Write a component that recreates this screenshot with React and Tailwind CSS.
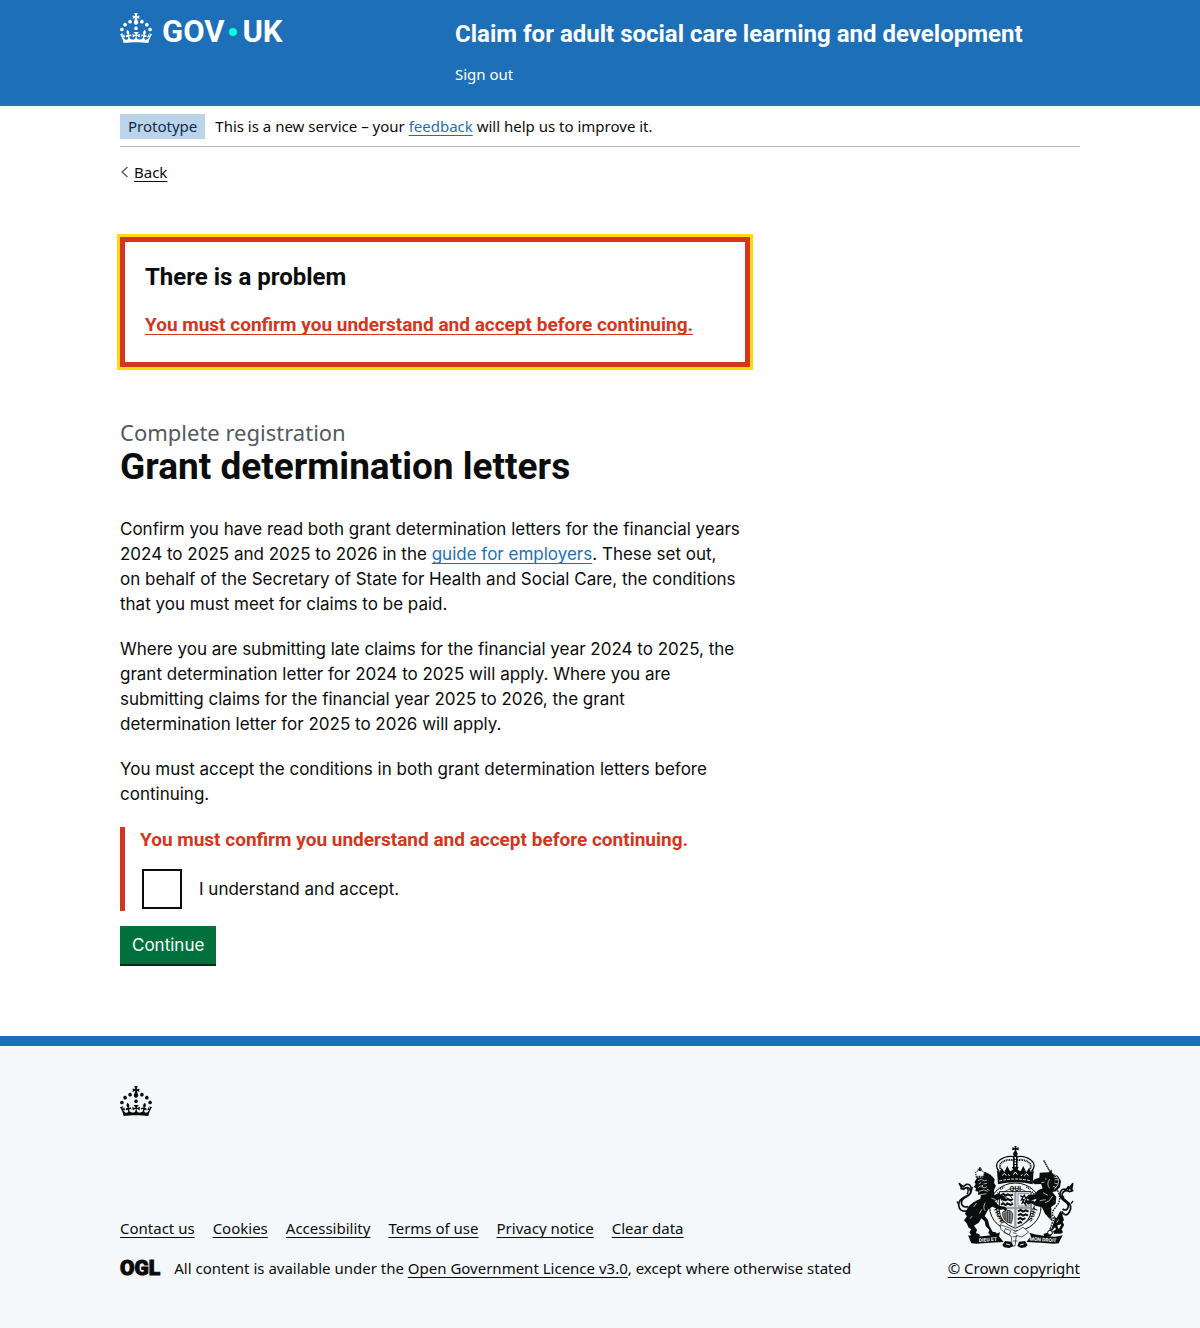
import React from "react";

const CROWN =
  "M22.6 10.4c-1 .4-2-.1-2.4-1-.4-.9.1-2 1-2.4.9-.4 2 .1 2.4 1s-.1 2-1 2.4m-5.9 6.7c-.9.4-2-.1-2.4-1-.4-.9.1-2 1-2.4.9-.4 2 .1 2.4 1s-.1 2-1 2.4m10.8-3.7c-1 .4-2-.1-2.4-1-.4-.9.1-2 1-2.4.9-.4 2 .1 2.4 1s0 2-1 2.4m3.3 4.8c-1 .4-2-.1-2.4-1-.4-.9.1-2 1-2.4.9-.4 2 .1 2.4 1s-.1 2-1 2.4M17 4.7l2.3 1.2V2.5l-2.3.7-.2-.2.9-3h-3.4l.9 3-.2.2c-.1.1-2.3-.7-2.3-.7v3.4L15 4.7c.1.1.1.2.2.2l-1.3 4c-.1.2-.1.4-.1.6 0 1.1.8 2 1.9 2.2h.7c1-.2 1.9-1.1 1.9-2.1 0-.2 0-.4-.1-.6l-1.3-4c-.1-.2 0-.2.1-.3m-7.6 5.7c.9.4 2-.1 2.4-1 .4-.9-.1-2-1-2.4-.9-.4-2 .1-2.4 1s0 2 1 2.4m-5 3c.9.4 2-.1 2.4-1 .4-.9-.1-2-1-2.4-.9-.4-2 .1-2.4 1s.1 2 1 2.4m-3.2 4.8c.9.4 2-.1 2.4-1 .4-.9-.1-2-1-2.4-.9-.4-2 .1-2.4 1s0 2 1 2.4m14.8 11c4.4 0 8.6.3 12.3.8 1.1-4.5 2.4-7 3.7-8.8l-2.5-.9c.2 1.3.3 1.9 0 2.7-.4-.4-.8-1.1-1.1-2.3l-1.2 4c.7-.5 1.3-.8 2-.9-1.1 2.5-2.6 3.1-3.5 3-1.1-.2-1.7-1.2-1.5-2.1.3-1.2 1.5-1.5 2.1-.1 1.1-2.3-.8-3-2-2.3 1.9-1.9 2.1-3.5.6-5.6-2.1 1.6-2.1 3.2-1.2 5.5-1.2-1.4-3.2-.6-2.5 1.6.9-1.4 2.1-.5 1.9.8-.2 1.1-1.7 2.1-3.5 1.9-2.7-.2-2.9-2.1-2.9-3.6.7-.1 1.9.5 2.9 1.9l.4-4.3c-1.1 1.1-2.1 1.4-3.2 1.4.4-1.2 2.1-3 2.1-3h-5.4s1.7 1.9 2.1 3c-1.1 0-2.1-.2-3.2-1.4l.4 4.3c1-1.4 2.2-2 2.9-1.9-.1 1.5-.2 3.4-2.9 3.6-1.9.2-3.4-.8-3.5-1.9-.2-1.3 1-2.2 1.9-.8.7-2.3-1.2-3-2.5-1.6.9-2.2.9-3.9-1.2-5.5-1.5 2-1.3 3.7.6 5.6-1.2-.7-3.1 0-2 2.3.6-1.4 1.8-1.1 2.1.1.2.9-.3 1.9-1.5 2.1-.9.2-2.4-.5-3.5-3 .6 0 1.2.3 2 .9l-1.2-4c-.3 1.1-.7 1.9-1.1 2.3-.3-.8-.2-1.4 0-2.7l-2.9.9C1.3 23 2.6 25.5 3.7 30c3.7-.5 7.9-.8 12.3-.8";

function Crown() {
  return (
    <svg className="block h-[30px] w-8 fill-current" viewBox="0 0 32 30" aria-hidden="true">
      <path d={CROWN} />
    </svg>
  );
}

const linkBase =
  "underline decoration-1 underline-offset-3 [text-decoration-skip-ink:none] hover:decoration-3";

function Link({ className = "", children }) {
  return (
    <a href="#" className={`${linkBase} ${className}`}>
      {children}
    </a>
  );
}

function RoyalArms() {
  return (
    <svg className="block h-[102px] w-[125px]" viewBox="18 33 375 306" aria-hidden="true">
      {/* imperial crown */}
      <g fill="none" stroke="#0b0c0c">
        <path d="M163 110C136 82 180 58 211 66C242 58 286 82 259 110" strokeWidth="4" />
        <path d="M170 106C152 84 184 70 206 76M252 106C270 84 238 70 216 76" strokeWidth="6" strokeDasharray="3 2" />
      </g>
      <g fill="#0b0c0c">
        <path d="M208 33h7l-2 6 8-2v9l-8-2 3 8h-9l3-8-8 2v-9l8 2z" />
        <circle cx="211" cy="57" r="7" />
        <path d="M204 64h14v38h-14z" />
        <path d="M159 148l-3-42 8 6 6-13 8 12 9-18 8 16 9-5-3-8h20l-3 8 9 5 8-16 9 18 8-12 6 13 8-6-3 42q-52-12-104 0z" />
      </g>
      <g fill="none" stroke="#f4f8fb">
        <path d="M211 66v32" strokeWidth="4" strokeDasharray="5 3" />
        <path d="M163 138q48-12 96 0" strokeWidth="3" strokeDasharray="8 4" />
        <path d="M172 122l6-7 6 7M205 119l6-8 6 8M238 122l6-7 6 7M190 118l4 5M232 118l-4 5" strokeWidth="3" />
      </g>

      {/* garter */}
      <ellipse cx="211" cy="216" rx="77" ry="72" fill="#f4f8fb" stroke="#0b0c0c" strokeWidth="3" />
      <ellipse cx="211" cy="216" rx="57" ry="56" fill="#f4f8fb" stroke="#0b0c0c" strokeWidth="2" />
      <g className="font-[Roboto] font-bold" fill="#0b0c0c" fontSize="21" textAnchor="middle">
        <text x="211" y="167">QUI</text>
        <text x="0" y="0" transform="translate(157 246) rotate(62)">HONI</text>
        <text x="0" y="0" transform="translate(269 241) rotate(-62)">SOIT</text>
      </g>
      <path d="M166 163l12-7M244 156l12 7M262 170l8 12M152 186l8-14" stroke="#0b0c0c" strokeWidth="5" strokeDasharray="3 3" />

      {/* quartered shield */}
      <path d="M163 170h95v56q0 36-47 54-48-18-48-54z" fill="#f4f8fb" stroke="#0b0c0c" strokeWidth="3" />
      <path d="M211 171v106M164 219h93" stroke="#9c9fa1" strokeWidth="7" />
      <g fill="none" stroke="#0b0c0c">
        <path d="M168 181l7-4 7 5 6-4 9 4 7-4M168 195l7-4 7 5 6-4 9 4 7-4M168 209l7-4 7 5 6-4 9 4 7-4" strokeWidth="6" />
        <path d="M171 186l4 3M185 187l3 3M198 186l3 3M171 200l4 3M185 201l3 3M198 200l3 3" strokeWidth="3" />
        <path d="M219 176h33v37h-33z" stroke="#85888a" strokeWidth="3" />
        <path d="M226 182l8 5-5 8 8-1-7 13M233 187l5-6 4 8 6-4-5 10 6 5-8-1 1 10-7-8" strokeWidth="4" />
        <path d="M219 229l8-4 7 5 8-4 9 4M219 241l8-4 7 5 8-4 7 4M218 253l8-4 7 5 8-5M218 265l8-4 5 3" strokeWidth="6" />
      </g>
      <path d="M173 231q12-10 24-3 9 6 6 20l-4 17q-12-1-20-10-9-12-6-24z" fill="#898c8d" stroke="#0b0c0c" strokeWidth="2" />
      <path d="M180 233v22M187 229v33M194 230v34" stroke="#0b0c0c" strokeWidth="2" />

      {/* lion */}
      <g fill="#0b0c0c">
        <path d="M94 132l-6 10 4 5-6 9 7 4-2 8 9 2-1 10 9-2-2 13q-23 9-37 25l-9 20 6 8-9 12 8 9 6 13 8 5-6 9 5 7-4 6 29 2 2-8-12-5 3-10-9-12 14-9 8-13 10 9 3 14 11 12-3 9 6 7h20l-3-9-10-2-10-18-4-17-10-12 11-20 12-8 22 10 11-2 7 5 4-6-6-7-18-3-13-14 18-7 10 8 6-5-2-9-20-9-13 4-1-15 6-13-6-8 2-11-12-14-16-8-13 4z" />
        <path d="M94 128l-2-16q13-12 26 1l-3 15z" fill="#f4f8fb" stroke="#0b0c0c" strokeWidth="3" strokeDasharray="5 2" />
        <path d="M102 97h5v11h-5zM98 101h13v3H98z" />
        <path d="M97 124h18" stroke="#0b0c0c" strokeWidth="4" strokeDasharray="3 2" />
      </g>
      <g fill="none" stroke="#f4f8fb" strokeWidth="2">
        <path d="M99 137l10-4 9 5 8-3M101 147l8-5M115 147l11-2M99 158l9-6 9 7 9-4M102 169l14-4 12 4M108 179l16-3M113 150l-2 7M125 162l8 4M95 204l-9 12M139 189l13 5M111 223l-8 13M82 243l-8 9" />
        <path d="M121 203q-9 16 0 25" />
      </g>
      <path d="M67 228Q43 231 41 211q0-18 19-26 23-9 15-21Q69 153 57 161l-6-1-8-14 12 9 9-7q12-2 15 12 3 16-17 27-15 8-12 20 4 12 19 8M46 160l13 3" fill="none" stroke="#0b0c0c" strokeWidth="5" strokeLinejoin="round" />
      <path d="M66 159q7 8 0 18M40 207l-4-8M78 166l5-10" fill="none" stroke="#0b0c0c" strokeWidth="4" />

      {/* unicorn */}
      <g fill="#0b0c0c">
        <path d="M312 112l8-9 1 11 18 9 9 15-3 18-12 13-11 2 12 15-2 20-14 11 3 17 12 15 9 4-6 12 3 14 12 12-4 5h-20l-3-7 9-6-10-22-12-13-11-12-9-19-18-4-15-9-9 5-7-8 11-6 17 5 5-9-19 6-10-7 3-9 20-3 10-12 14-6-5-13-19 1-9-7 9-8 14-5 1-15z" />
        <path d="M346 227l-9 18-12 18-7 12-9 18-13 3 2 9h18l8-10-3-8 14-16 10-2 12-14-3-10z" />
      </g>
      <path d="M296 76l19 34" fill="none" stroke="#0b0c0c" strokeWidth="4" strokeDasharray="5 1" />
      <g fill="none" stroke="#f4f8fb" strokeWidth="2">
        <path d="M324 116q22 12 15 33l-12 15M326 126l10 2M329 135l12-1M328 144l11 3M324 154l10 4M300 132h5M289 143l10-2M314 132q-11 16 0 28M294 173l15 8M284 197l18-3M323 183q-9 18-23 20M326 239l-10 14M345 249l-10 14" />
      </g>
      <path d="M337 166q12 20 3 40l-18 24 3 25-10 27" fill="none" stroke="#f4f8fb" strokeWidth="7" />
      <path d="M337 166q12 20 3 40l-18 24 3 25-10 27" fill="none" stroke="#0b0c0c" strokeWidth="4" strokeDasharray="5 3" />
      <circle cx="315" cy="293" r="7" fill="#f4f8fb" stroke="#0b0c0c" strokeWidth="3" />
      <path d="M350 229q13 20 23 2 12-20-11-35-19-14-6-26 8-6 17 0l10-3-13-12-7 9q-12-5-17 8-5 16 15 28 14 10 6 22-7 6-14 0M369 164l14-18-3 16" fill="none" stroke="#0b0c0c" strokeWidth="5" strokeLinejoin="round" />
      <path d="M378 206l6-8M357 188l-6-8" fill="none" stroke="#0b0c0c" strokeWidth="4" />
      <path d="M350 232l-5 22 8 16-8 14 6 10" fill="none" stroke="#0b0c0c" strokeWidth="8" />

      {/* buckle, motto scroll and plinth */}
      <path d="M165 269l29 10 18 11 22-13 17 14-20 15-17-5-4 32h-9l-2-29-31-20z" fill="#f4f8fb" stroke="#0b0c0c" strokeWidth="2" />
      <path d="M181 281l16 6-4 13-16-7zM204 293l11 3M203 305h14M204 318h13" fill="none" stroke="#0b0c0c" strokeWidth="2" />
      <path d="M69 301l21 4q45 0 75-13l-3 12 14 17q-42 2-81 5l-16-1zM353 301l-21 4q-42-1-79-12l5 11-14 17q42 2 82 5l15-1z" fill="#0b0c0c" />
      <path d="M172 330l8-12 18 2 7 13-12 6-16-2zM248 330l-8-12-18 2-5 13 11 6 14-2z" fill="#0b0c0c" />
      <path d="M183 327l12 3M225 330l11-3" stroke="#f4f8fb" strokeWidth="3" />
      <g className="font-[Roboto] font-bold" fill="#f4f8fb" fontSize="15" textAnchor="middle">
        <text x="0" y="0" transform="translate(129 319) rotate(-4)">DIEU ET</text>
        <text x="0" y="0" transform="translate(294 319) rotate(4)">MON DROIT</text>
      </g>
    </svg>
  );
}

const wrap = "mx-auto w-full max-w-[960px]";

export default function App() {
  return (
    <div className="min-h-screen bg-[#f4f8fb] font-['Noto_Sans',sans-serif] text-[15px] leading-5 text-[#0b0c0c]">
      <header className="bg-[#1d70b8] text-white">
        <div className={`${wrap} flex pt-3 pb-[22px]`}>
          <a href="#" aria-label="GOV.UK" className="flex w-[335px] items-start pt-px font-[Roboto] text-[31px] leading-8 font-bold">
            <Crown />
            <span className="ml-[10px] flex items-center pt-[3px]">
              <span>GOV</span>
              <span className="mx-[5px] size-2 rounded-full bg-[#00ffe0]" />
              <span>UK</span>
            </span>
          </a>
          <div className="flex-1">
            <a href="#" className="block py-[7px] font-[Roboto] text-2xl leading-[30px] font-bold">
              Claim for adult social care learning and development
            </a>
            <nav className="mt-2">
              <a href="#" className="block">Sign out</a>
            </nav>
          </div>
        </div>
      </header>

      <div className="bg-white">
        <div className={wrap}>
          <div className="flex items-center gap-[10px] border-b border-[#b1b4b6] pt-2 pb-[7px] leading-[25px]">
            <strong className="bg-[#bbd4ea] px-2 font-normal text-[#0c2d4a]">Prototype</strong>
            <span>
              This is a new service – your <Link className="text-[#1d70b8]">feedback</Link> will help us to improve it.
            </span>
          </div>

          <a href="#" className="mt-[15px] flex w-fit items-center gap-1">
            <svg className="h-3 w-[10px]" viewBox="0 0 10 12" fill="none" stroke="#505a5f" strokeWidth="1.300" aria-hidden="true">
              <path d="M7.500 1L2 6l5.500 5" />
            </svg>
            <span className={linkBase}>Back</span>
          </a>

          <main className="max-w-[630px] pt-[55px] pb-[72px] text-[17px] leading-[25px]">
            <div role="alert" className="mb-[50px] border-5 border-[#d4351c] px-5 pt-5 pb-[25px] outline-3 outline-[#ffdd00]">
              <h2 className="mb-5 font-[Roboto] text-2xl leading-[30px] font-bold">There is a problem</h2>
              <Link className="block font-[Roboto] text-[19px] font-bold text-[#d4351c]">
                You must confirm you understand and accept before continuing.
              </Link>
            </div>

            <span className="block text-[22px] leading-[30px] text-[#505a5f]">Complete registration</span>
            <h1 className="mb-[30px] font-[Roboto] text-[37px] leading-10 font-bold">Grant determination letters</h1>

            <div className="font-[Inter]">
              <p className="mb-5">
                Confirm you have read both grant determination letters for the financial years
                <br />
                2024 to 2025 and 2025 to 2026 in the <Link className="text-[#1d70b8]">guide for employers</Link>. These
                set out,
                <br />
                on behalf of the Secretary of State for Health and Social Care, the conditions
                <br />
                that you must meet for claims to be paid.
              </p>
              <p className="mb-5">
                Where you are submitting late claims for the financial year 2024 to 2025, the
                <br />
                grant determination letter for 2024 to 2025 will apply. Where you are
                <br />
                submitting claims for the financial year 2025 to 2026, the grant
                <br />
                determination letter for 2025 to 2026 will apply.
              </p>
              <p className="mb-5">
                You must accept the conditions in both grant determination letters before
                <br />
                continuing.
              </p>
            </div>

            <form className="font-[Inter]" onSubmit={(e) => e.preventDefault()}>
              <div className="border-l-5 border-[#d4351c] pl-[15px]">
                <p id="accept-error" className="mb-[15px] font-[Roboto] text-[19px] font-bold text-[#d4351c]">
                  You must confirm you understand and accept before continuing.
                </p>
                <div className="flex items-center">
                  <input
                    id="accept"
                    type="checkbox"
                    aria-describedby="accept-error"
                    className="m-0.5 size-10 appearance-none border-2 border-[#0b0c0c] bg-white checked:bg-[#0b0c0c]"
                  />
                  <label htmlFor="accept" className="px-[15px]">I understand and accept.</label>
                </div>
              </div>
              <button type="submit" className="mt-[15px] block bg-[#00703c] px-3 pt-[7px] pb-[6px] text-white shadow-[0_2px_0_#002d18]">
                Continue
              </button>
            </form>
          </main>
        </div>
      </div>

      <footer className="border-t-10 border-[#1d70b8] pt-10 pb-[50px]">
        <div className={wrap}>
          <Crown />
          <div className="mt-[30px] flex items-end justify-between">
            <div>
              <ul className="mb-5 flex gap-[18px]">
                {["Contact us", "Cookies", "Accessibility", "Terms of use", "Privacy notice", "Clear data"].map((t) => (
                  <li key={t}>
                    <Link>{t}</Link>
                  </li>
                ))}
              </ul>
              <div className="flex items-center">
                <span className="mr-[14px] font-[Roboto] text-[21px] leading-5 font-black [-webkit-text-stroke:1px_#0b0c0c]">OGL</span>
                <span>
                  All content is available under the <Link>Open Government Licence v3.0</Link>, except where otherwise stated
                </span>
              </div>
            </div>
            <div className="flex flex-col items-center gap-[10px]">
              <RoyalArms />
              <Link>© Crown copyright</Link>
            </div>
          </div>
        </div>
      </footer>
    </div>
  );
}
